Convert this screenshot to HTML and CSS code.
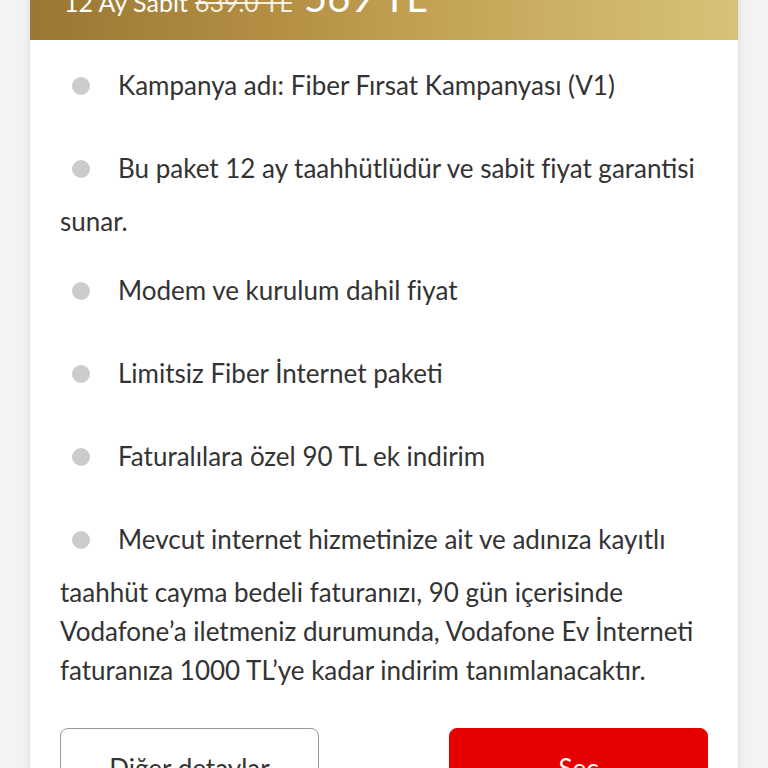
FILE: index.html
```html
<!DOCTYPE html>
<html lang="tr">
<head>
<meta charset="utf-8">
<link rel="stylesheet" href="styles.css">
</head>
<body>
<div class="page">
  <div class="card">
    <div class="card-head">
      <span class="term">12 Ay Sabit</span>
      <span class="old">639.0 TL</span>
      <span class="price">569 TL</span>
    </div>
    <div class="card-body">
      <ul class="features">
        <li>Kampanya adı: Fiber Fırsat Kampanyası (V1)</li>
        <li>Bu paket 12 ay taahhütlüdür ve sabit fiyat garantisi sunar.</li>
        <li>Modem ve kurulum dahil fiyat</li>
        <li>Limitsiz Fiber İnternet paketi</li>
        <li>Faturalılara özel 90 TL ek indirim</li>
        <li>Mevcut internet hizmetinize ait ve adınıza kayıtlı taahhüt cayma bedeli faturanızı, 90 gün içerisinde Vodafone’a iletmeniz durumunda, Vodafone Ev İnterneti faturanıza 1000 TL’ye kadar indirim tanımlanacaktır.</li>
      </ul>
      <div class="actions">
        <button class="btn btn-outline">Diğer detaylar</button>
        <button class="btn btn-red">Seç</button>
      </div>
    </div>
  </div>
</div>
</body>
</html>
```

FILE: styles.css
```css
html, body {
  margin: 0;
  padding: 0;
  background: #f3f3f3;
}
body {
  font-family: "Lato", "Liberation Sans", sans-serif;
  color: #333333;
}
.page {
  padding: 0 30px;
}
.card {
  margin-top: -30px;
  background: #ffffff;
  box-shadow: 0 0 8px rgba(0, 0, 0, 0.12);
}
.card-head {
  height: 70px;
  box-sizing: border-box;
  padding: 7px 34px 0;
  background: linear-gradient(90deg, #9a7732 0%, #b48f44 35%, #c8a95c 65%, #d6c377 100%);
  color: #ffffff;
  display: flex;
  align-items: baseline;
  gap: 7px;
  line-height: 1;
}
.term {
  font-size: 25px;
}
.old {
  font-size: 25px;
  text-decoration: line-through;
  color: rgba(255, 255, 255, 0.85);
}
.price {
  font-size: 40px;
  margin-left: 5px;
}
.card-body {
  padding: 26px 30px 0;
}
.features {
  list-style: none;
  margin: 0;
  padding: 0;
}
.features li {
  font-size: 26px;
  line-height: 39px;
  margin: 0 0 30px;
}
.features li::before {
  content: "";
  display: inline-block;
  width: 18px;
  height: 18px;
  border-radius: 50%;
  background: #cccccc;
  vertical-align: top;
  margin: 11px 28px 24px 12px;
}
.actions {
  display: flex;
  justify-content: space-between;
  padding-top: 8px;
}
.btn {
  width: 259px;
  height: 80px;
  border-radius: 8px;
  font-family: inherit;
  font-size: 26px;
  cursor: pointer;
}
.btn-outline {
  background: #ffffff;
  border: 1px solid #999999;
  color: #333333;
}
.btn-red {
  background: #e60000;
  border: 1px solid #e60000;
  color: #ffffff;
}
```
